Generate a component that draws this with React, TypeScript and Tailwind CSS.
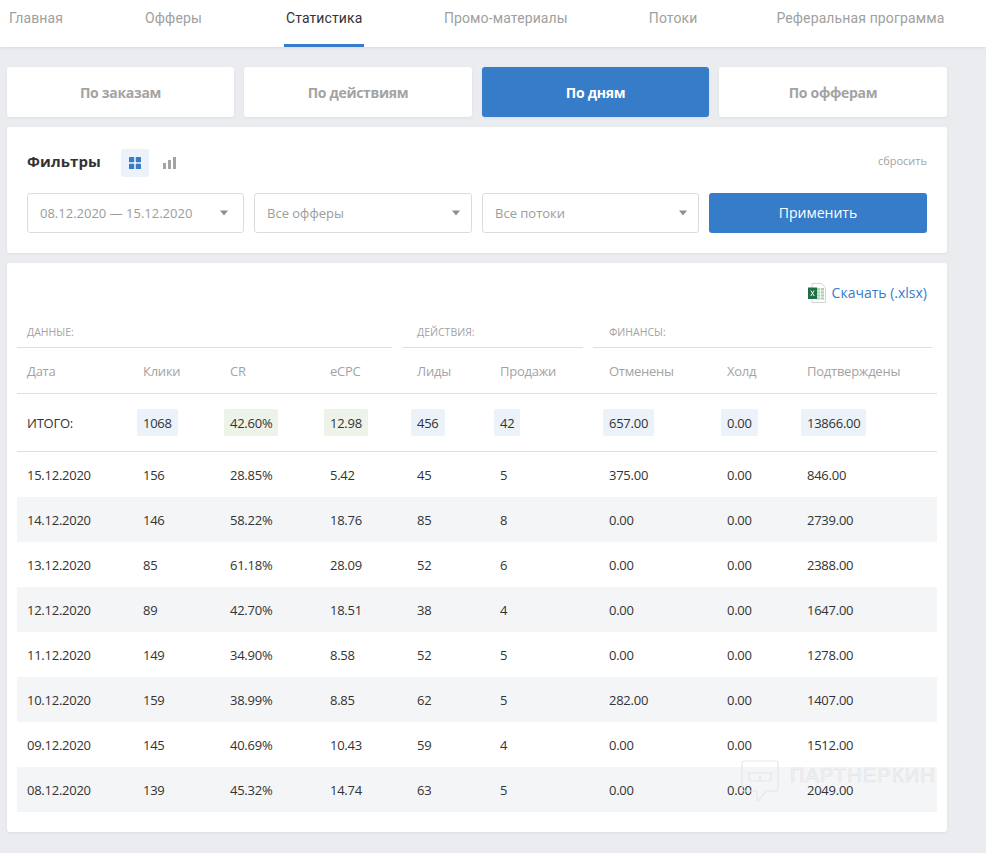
const navItems = [
  { label: 'Главная', cls: '' },
  { label: 'Офферы', cls: 'ml-[78px]' },
  { label: 'Статистика', cls: 'ml-[80px] w-[80px] text-center border-b-[3px] border-[#367cc9] !text-[#333]' },
  { label: 'Промо-материалы', cls: 'ml-[78px]' },
  { label: 'Потоки', cls: 'ml-[77px]' },
  { label: 'Реферальная программа', cls: 'ml-[75px]' },
];

const tabs = ['По заказам', 'По действиям', 'По дням', 'По офферам'];

const cols = 'grid grid-cols-[116px_87px_100px_87px_83px_109px_118px_80px_140px]';

const rows = [
  ['15.12.2020', '156', '28.85%', '5.42', '45', '5', '375.00', '0.00', '846.00'],
  ['14.12.2020', '146', '58.22%', '18.76', '85', '8', '0.00', '0.00', '2739.00'],
  ['13.12.2020', '85', '61.18%', '28.09', '52', '6', '0.00', '0.00', '2388.00'],
  ['12.12.2020', '89', '42.70%', '18.51', '38', '4', '0.00', '0.00', '1647.00'],
  ['11.12.2020', '149', '34.90%', '8.58', '52', '5', '0.00', '0.00', '1278.00'],
  ['10.12.2020', '159', '38.99%', '8.85', '62', '5', '282.00', '0.00', '1407.00'],
  ['09.12.2020', '145', '40.69%', '10.43', '59', '4', '0.00', '0.00', '1512.00'],
  ['08.12.2020', '139', '45.32%', '14.74', '63', '5', '0.00', '0.00', '2049.00'],
];

const heads = ['Дата', 'Клики', 'CR', 'eCPC', 'Лиды', 'Продажи', 'Отменены', 'Холд', 'Подтверждены'];

const totals = [
  { v: '1068', green: false },
  { v: '42.60%', green: true },
  { v: '12.98', green: true },
  { v: '456', green: false },
  { v: '42', green: false },
  { v: '657.00', green: false },
  { v: '0.00', green: false },
  { v: '13866.00', green: false },
];

const Caret = () => (
  <svg width="10" height="6" viewBox="0 0 10 6" className="shrink-0">
    <path d="M1 0.5h8L5 5.5z" fill="#8f8f8f" />
  </svg>
);

const Select = ({ label, wide }: { label: string; wide?: boolean }) => (
  <div
    className={
      wide
        ? 'flex h-10 items-center justify-between rounded-[3px] border border-[#dcdcdc] bg-white pr-[14px] pl-3 text-[13px] text-[#9c9c9c]'
        : 'flex h-10 items-center justify-between rounded-[3px] border border-[#dcdcdc] bg-white pr-[10px] pl-3 text-[13px] text-[#9c9c9c]'
    }
  >
    <span className="pt-[2px]">{label}</span>
    <Caret />
  </div>
);

const ExcelIcon = () => (
  <svg width="18" height="20" viewBox="0 0 18 20">
    <path d="M4 0.5h9.5L17.5 4.5V19.5H4z" fill="#fff" stroke="#d4d4d4" />
    <path d="M9 5h7v11.5H9z" fill="#a5d3b5" />
    <path d="M9 8h7M9 11h7M9 14h7M12.5 5v11.5" stroke="#fff" strokeWidth="0.8" />
    <path d="M0 4.5h9v11.5H0z" fill="#1f6f43" />
    <path d="M2.8 7.5l3.4 5.5M6.2 7.5l-3.4 5.5" stroke="#fff" strokeWidth="1" />
  </svg>
);

export default function App() {
  return (
    <div className="relative min-h-[853px] bg-[#ebecf0] font-['Open_Sans',sans-serif] text-[#333]">
      <header className="flex h-[47px] bg-white pl-[7px] shadow-[0_1px_3px_rgba(0,0,0,0.08)] font-['Roboto',sans-serif] text-sm tracking-[0.12px]">
        {navItems.map((item) => (
          <div
            key={item.label}
            className={`h-[47px] px-[2px] pt-[8px] text-[#a0a0a0] whitespace-nowrap ${item.cls}`}
          >
            {item.label}
          </div>
        ))}
      </header>

      <main className="w-[940px] ml-[7px] pt-5 pb-[21px]">
        <div className="grid grid-cols-[227px_228px_227px_228px] gap-[10px]">
          {tabs.map((t) => (
            <div
              key={t}
              className={
                t === 'По дням'
                  ? 'flex h-[50px] items-center justify-center rounded-[3px] bg-[#367cc9] pt-[2px] text-sm font-bold tracking-[-0.3px] text-white shadow-[0_1px_3px_rgba(0,0,0,0.06)]'
                  : 'flex h-[50px] items-center justify-center rounded-[3px] bg-white pt-[2px] text-sm font-bold tracking-[-0.3px] text-[#a3a3a3] shadow-[0_1px_3px_rgba(0,0,0,0.06)]'
              }
            >
              {t}
            </div>
          ))}
        </div>

        <section className="mt-[10px] h-[126px] rounded-[3px] bg-white px-5 pt-[22px] shadow-[0_1px_3px_rgba(0,0,0,0.06)]">
          <div className="flex h-7 items-center">
            <span className="pb-1 text-[15px] font-bold tracking-[0.1px] text-[#333]">Фильтры</span>
            <div className="ml-5 flex h-7 w-7 items-center justify-center rounded-[3px] bg-[#ebf2fa]">
              <svg width="12" height="12" viewBox="0 0 12 12">
                <rect width="5.2" height="5.2" rx="0.6" fill="#367cc9" />
                <rect x="6.8" width="5.2" height="5.2" rx="0.6" fill="#367cc9" />
                <rect y="6.8" width="5.2" height="5.2" rx="0.6" fill="#367cc9" />
                <rect x="6.8" y="6.8" width="5.2" height="5.2" rx="0.6" fill="#367cc9" />
              </svg>
            </div>
            <svg width="13" height="12" viewBox="0 0 13 12" className="ml-[14px]">
              <rect y="6" width="3" height="6" fill="#a3a3a3" />
              <rect x="5" y="3" width="3" height="9" fill="#a3a3a3" />
              <rect x="10" width="3" height="12" fill="#a3a3a3" />
            </svg>
            <span className="ml-auto pb-1 text-[11px] text-[#a3a3a3]">сбросить</span>
          </div>
          <div className="mt-[16px] grid grid-cols-[217px_218px_217px_218px] gap-[10px]">
            <Select label="08.12.2020 — 15.12.2020" wide />
            <Select label="Все офферы" />
            <Select label="Все потоки" />
            <div className="flex h-10 items-center justify-center rounded-[3px] bg-[#367cc9] text-sm text-white">
              Применить
            </div>
          </div>
        </section>

        <section className="mt-[10px] h-[569px] rounded-[3px] bg-white px-[10px] shadow-[0_1px_3px_rgba(0,0,0,0.06)]">
          <div className="flex h-[59px] items-center justify-end gap-[6px] pr-[10px]">
            <ExcelIcon />
            <span className="text-sm text-[#367cc9]">Скачать (.xlsx)</span>
          </div>

          <div className="flex h-[26px] text-[10.5px] uppercase text-[#a3a3a3]">
            <div className="w-[375px] border-b border-[#dfdfdf] pl-[10px] pt-[3px]">Данные:</div>
            <div className="ml-[10px] w-[181px] border-b border-[#dfdfdf] pl-[15px] pt-[3px]">Действия:</div>
            <div className="ml-[10px] w-[339px] border-b border-[#dfdfdf] pl-[16px] pt-[3px]">Финансы:</div>
          </div>

          <div className={`${cols} h-[46px] items-center border-b border-[#dfdfdf] pt-[2px] text-[13px] tracking-[-0.25px] text-[#a3a3a3]`}>
            {heads.map((h) => (
              <div key={h} className="pl-[10px]">{h}</div>
            ))}
          </div>

          <div className={`${cols} h-[58px] items-center border-b border-[#dfdfdf] text-[13px] tracking-[-0.25px]`}>
            <div className="pl-[10px] pt-[2px]">ИТОГО:</div>
            {totals.map((t) => (
              <div key={t.v} className="pl-1">
                <span
                  className={
                    t.green
                      ? 'inline-flex h-[27px] items-center rounded-[2px] bg-[#edf3e9] px-[6px] pt-[2px]'
                      : 'inline-flex h-[27px] items-center rounded-[2px] bg-[#ebf2fa] px-[6px] pt-[2px]'
                  }
                >
                  {t.v}
                </span>
              </div>
            ))}
          </div>

          {rows.map((row, i) => (
            <div
              key={row[0]}
              className={
                i % 2 === 1
                  ? `${cols} h-[45px] items-center bg-[#f4f5f7] pt-[2px] text-[13px] tracking-[-0.25px]`
                  : `${cols} h-[45px] items-center pt-[2px] text-[13px] tracking-[-0.25px]`
              }
            >
              {row.map((c, j) => (
                <div key={j} className="pl-[10px]">{c}</div>
              ))}
            </div>
          ))}
        </section>
      </main>

      <div className="absolute left-[741px] top-[760px] flex items-start gap-[11px]">
        <svg width="38" height="42" viewBox="0 0 38 42" fill="none" stroke="#e6e7ea" strokeWidth="1.2">
          <path d="M3 1h32a2 2 0 0 1 2 2v26a2 2 0 0 1-2 2H25l-7 9a1 1 0 0 1-2-1v-8H3a2 2 0 0 1-2-2V3a2 2 0 0 1 2-2z" />
          <path d="M6 13h26M8 13v5a3 3 0 0 0 3 3h4a3 3 0 0 0 3-5M20 16a3 3 0 0 0 3 5h4a3 3 0 0 0 3-3v-5" />
        </svg>
        <span className="mt-[3px] text-[20px] font-normal leading-[24px] tracking-[1.2px] text-transparent font-['Liberation_Sans',sans-serif] [-webkit-text-stroke:0.7px_#e2e3e6]">
          ПАРТНЕРКИН
        </span>
      </div>
    </div>
  );
}
